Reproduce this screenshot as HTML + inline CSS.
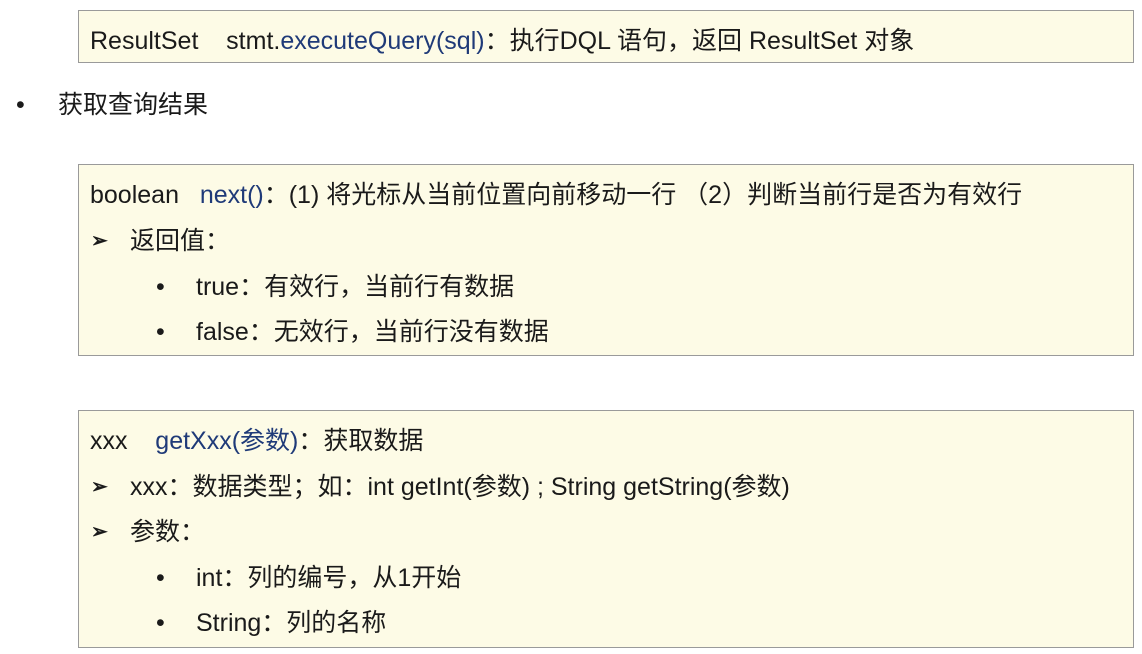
<!DOCTYPE html>
<html><head><meta charset="utf-8"><style>
body{margin:0;width:1142px;height:654px;background:#fff;font-family:"Liberation Sans","Noto Sans CJK SC",sans-serif;font-size:25px;color:#1a1a1a;position:relative;overflow:hidden}
.box{position:absolute;left:78px;width:1054px;background:#fdfbe6;border:1px solid #9a9a9a}
.l{position:absolute;white-space:nowrap;line-height:28px}
.b{color:#1f3a78}
.a{font-size:20px;font-weight:bold}
</style></head><body>
<div class="box" style="top:10px;height:51px"></div>
<div class="l" style="left:90px;top:27px">ResultSet&nbsp;&nbsp;&nbsp; stmt.<span class="b">executeQuery(sql)</span>：执行DQL 语句，返回 ResultSet 对象</div>
<div class="l" style="left:16px;top:91px">•</div>
<div class="l" style="left:58px;top:91px">获取查询结果</div>
<div class="box" style="top:164px;height:190px"></div>
<div class="l" style="left:90px;top:181px">boolean&nbsp;&nbsp; <span class="b">next()</span>：(1) 将光标从当前位置向前移动一行 （2）判断当前行是否为有效行</div>
<div class="l a" style="left:91px;top:227px">➢</div><div class="l" style="left:130px;top:227px">返回值：</div>
<div class="l" style="left:156px;top:273px">•</div><div class="l" style="left:196px;top:273px">true：有效行，当前行有数据</div>
<div class="l" style="left:156px;top:318px">•</div><div class="l" style="left:196px;top:318px">false：无效行，当前行没有数据</div>
<div class="box" style="top:410px;height:236px"></div>
<div class="l" style="left:90px;top:427px">xxx&nbsp;&nbsp;&nbsp; <span class="b">getXxx(参数)</span>：获取数据</div>
<div class="l a" style="left:91px;top:473px">➢</div><div class="l" style="left:130px;top:473px">xxx：数据类型；如：int getInt(参数) ; String getString(参数)</div>
<div class="l a" style="left:91px;top:518px">➢</div><div class="l" style="left:130px;top:518px">参数：</div>
<div class="l" style="left:156px;top:564px">•</div><div class="l" style="left:196px;top:564px">int：列的编号，从1开始</div>
<div class="l" style="left:156px;top:609px">•</div><div class="l" style="left:196px;top:609px">String：列的名称</div>
</body></html>
